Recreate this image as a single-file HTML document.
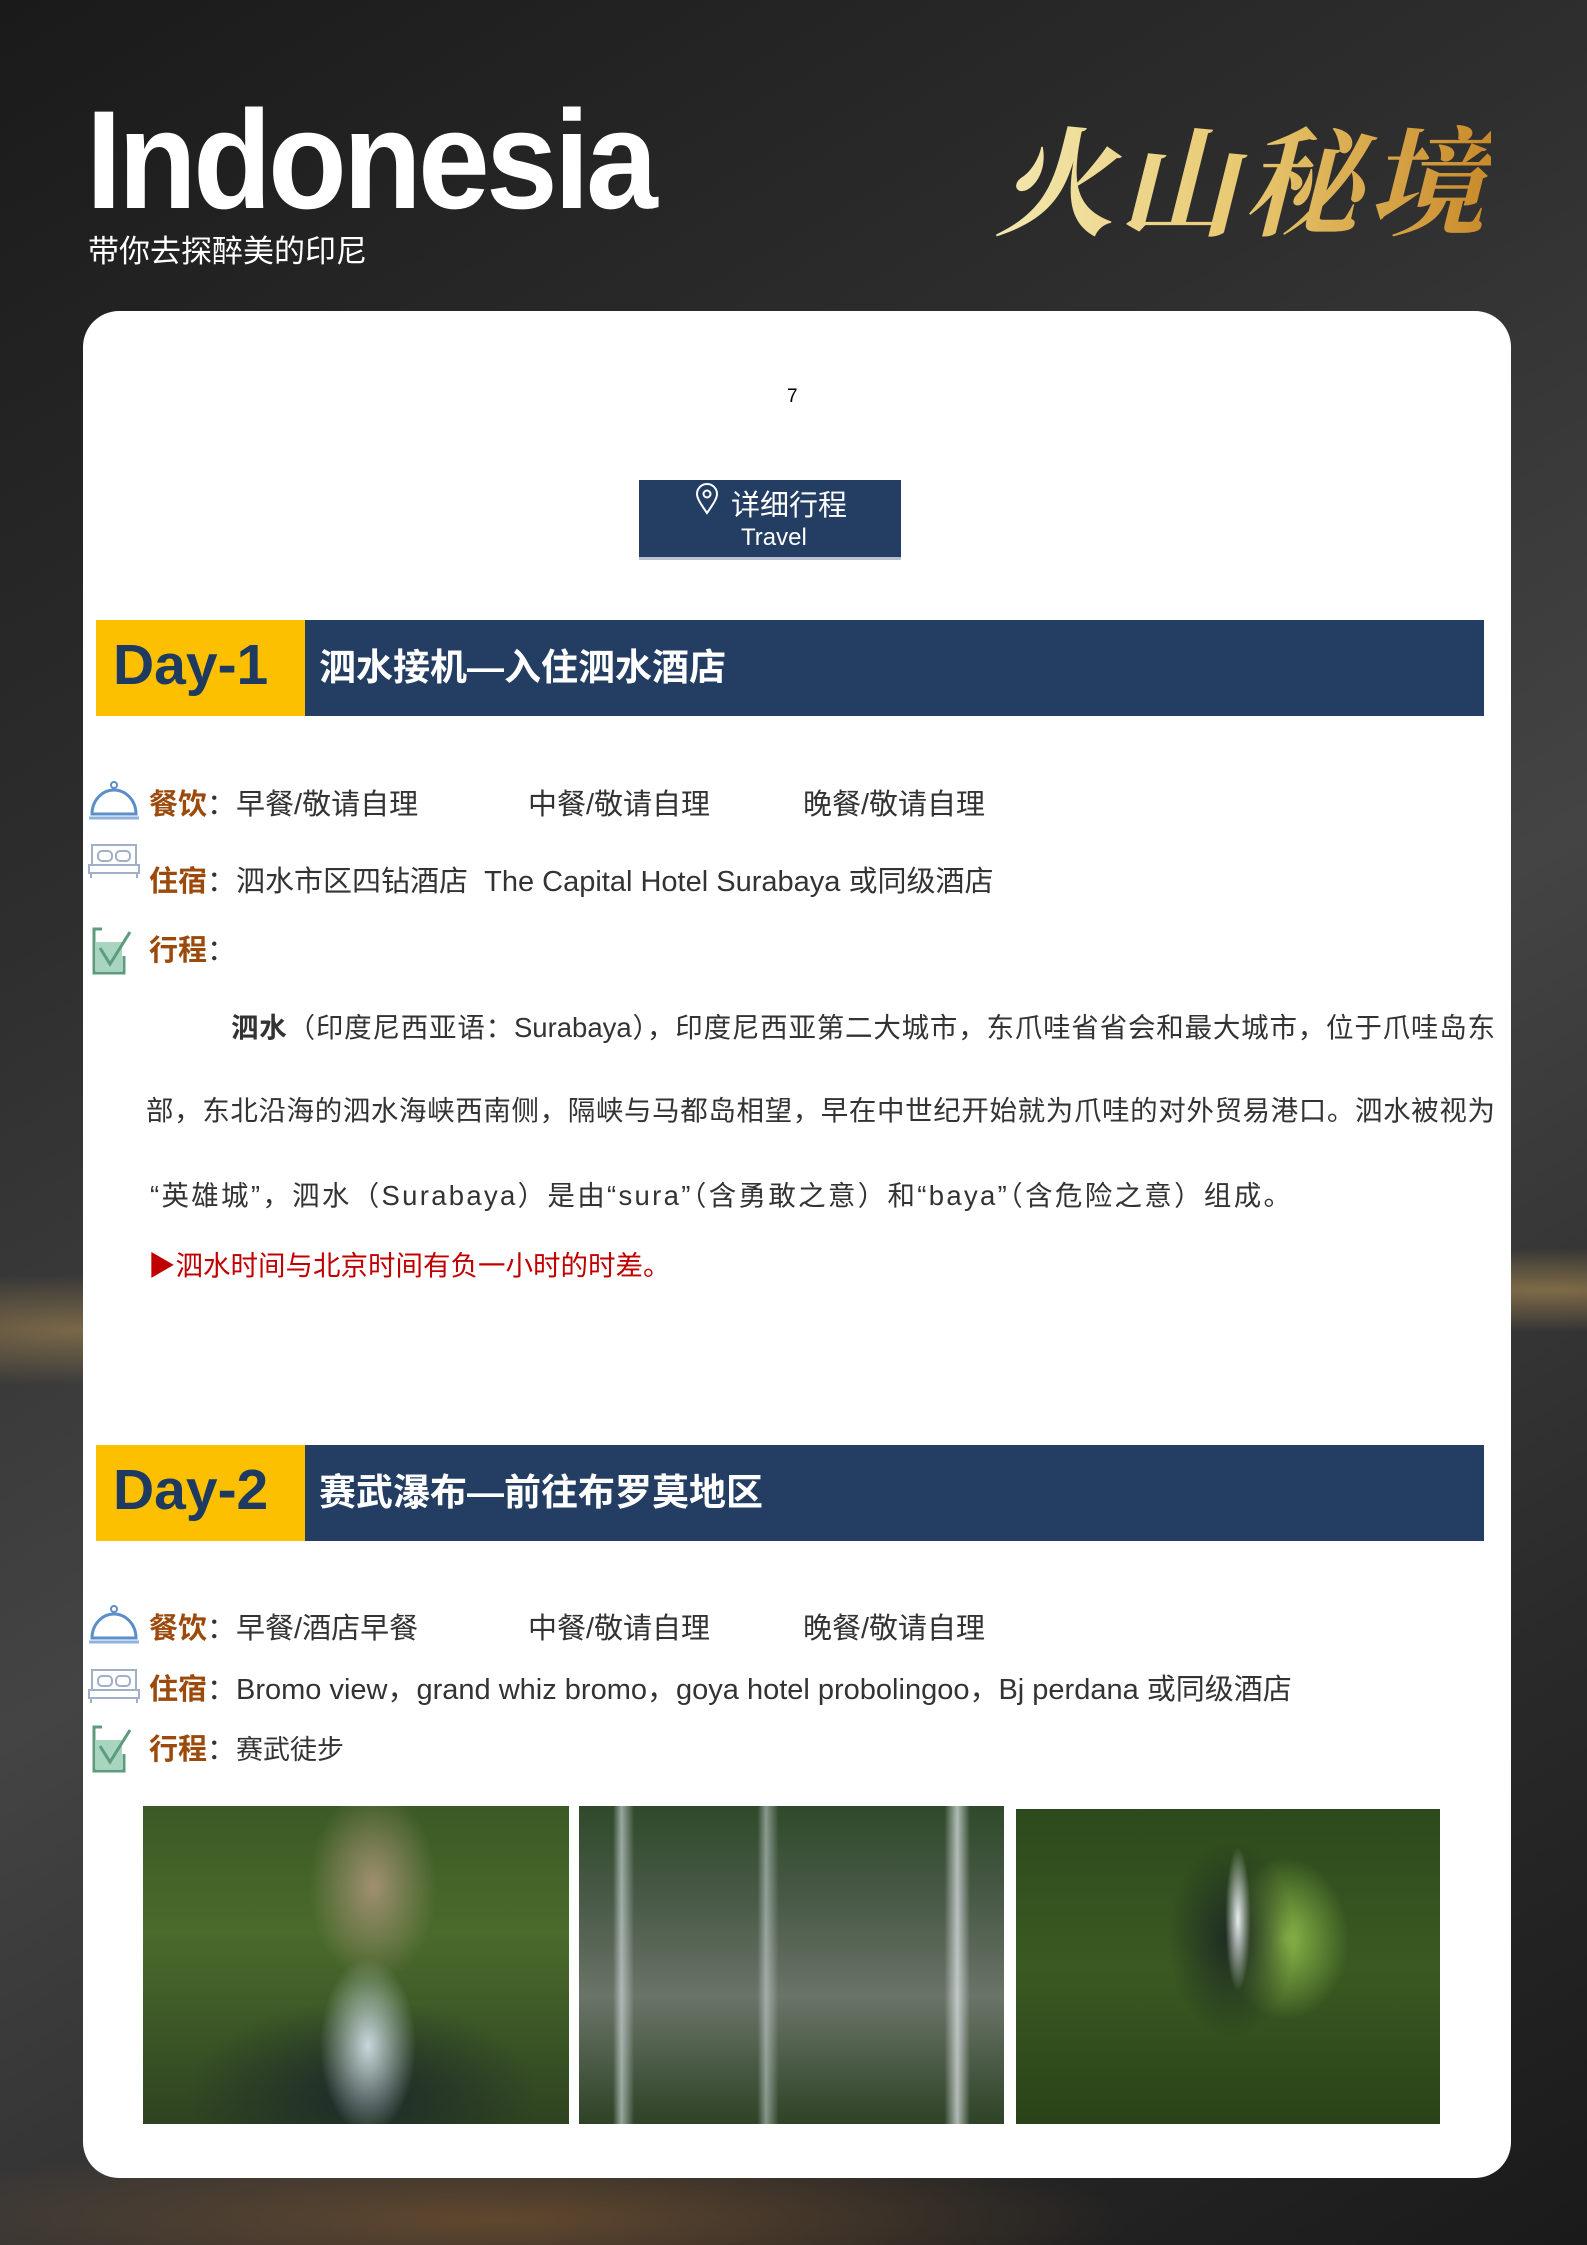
<!DOCTYPE html>
<html><head><meta charset="utf-8">
<style>
*{margin:0;padding:0;box-sizing:border-box}
body{width:1587px;height:2245px;position:relative;overflow:hidden;
background:
radial-gradient(ellipse 500px 80px at 80px 1330px,rgba(200,160,90,.45),transparent 70%),
radial-gradient(ellipse 600px 60px at 1550px 1290px,rgba(200,160,90,.5),transparent 70%),
radial-gradient(ellipse 900px 120px at 500px 2220px,rgba(150,100,50,.5),transparent 70%),
linear-gradient(150deg,#1a1a1a 0%,#2e2e2e 30%,#444 55%,#2a2a2a 80%,#1a1a1a 100%);
font-family:"Liberation Sans","Noto Sans CJK SC",sans-serif;color:#333}
.a{position:absolute;white-space:nowrap}
.card{position:absolute;left:83px;top:311px;width:1428px;height:1867px;background:#fff;border-radius:36px}
.lbl{color:#9c4a0c;font-weight:bold}
.row{font-size:29px;line-height:34px}
.bar{position:absolute;left:96px;width:1388px;height:96px;background:#233d63}
.bar .y{position:absolute;left:0;top:0;width:209px;height:96px;background:#fcc000;color:#1f3a60;font-weight:bold;font-size:57px;line-height:90px;padding-left:17px}
.bar .t{position:absolute;left:223px;top:0;color:#fff;font-weight:bold;font-size:37px;line-height:96px}
.p{font-size:27.5px;line-height:34px;position:absolute}
.j{text-align:justify;text-align-last:justify}
</style></head><body>
<div class="a" style="left:86px;top:80px;font-size:140px;font-weight:bold;color:#fff;letter-spacing:-4px;line-height:160px;transform:scaleX(0.92);transform-origin:left top">Indonesia</div>
<div class="a" style="left:88px;top:232px;font-size:31px;color:#fff;line-height:40px">带你去探醉美的印尼</div>
<div class="a" style="left:995px;top:100px;font-size:118px;line-height:150px;font-family:'Noto Serif CJK SC',serif;font-weight:bold;font-style:italic;background:linear-gradient(90deg,#f3e8b0,#e8c870 50%,#c98a2a);-webkit-background-clip:text;background-clip:text;color:transparent;letter-spacing:6px">火山秘境</div>

<div class="card"></div>
<div class="a" style="left:787px;top:386px;font-size:19px;color:#000">7</div>
<div class="a" style="left:639px;top:480px;width:262px;height:80px;background:#233d63;border-bottom:3px solid #b8c2d0"></div>
<svg class="a" style="left:694px;top:483px" width="26" height="32" viewBox="0 0 26 32"><path d="M13 30 C6 20 3 15 3 11 A10 10 0 0 1 23 11 C23 15 20 20 13 30Z" fill="none" stroke="#fff" stroke-width="2"/><circle cx="13" cy="11" r="3.5" fill="none" stroke="#fff" stroke-width="2"/></svg>
<div class="a" style="left:731px;top:488px;font-size:29px;color:#fff;line-height:36px">详细行程</div>
<div class="a" style="left:741px;top:523px;font-size:24px;color:#fff;line-height:30px">Travel</div>

<div class="bar" style="top:620px"><div class="y">Day-1</div><div class="t">泗水接机—入住泗水酒店</div></div>

<svg class="a" style="left:88px;top:780px" width="52" height="42" viewBox="0 0 52 42"><circle cx="26" cy="5" r="3" fill="none" stroke="#5b8fc9" stroke-width="2"/><path d="M4 34 A22 24 0 0 1 48 34 Z" fill="none" stroke="#5b8fc9" stroke-width="3"/><line x1="1" y1="38" x2="51" y2="38" stroke="#8fb2dc" stroke-width="3"/></svg>
<div class="a row" style="left:149px;top:788px"><span class="lbl">餐饮</span>：早餐/敬请自理</div>
<div class="a row" style="left:528px;top:788px">中餐/敬请自理</div>
<div class="a row" style="left:803px;top:788px">晚餐/敬请自理</div>
<svg class="a" style="left:88px;top:843px" width="52" height="36" viewBox="0 0 52 36"><rect x="4" y="2" width="44" height="20" fill="none" stroke="#9fb0c8" stroke-width="2"/><rect x="10" y="8" width="14" height="10" rx="4" fill="none" stroke="#9fb0c8" stroke-width="2"/><rect x="28" y="8" width="14" height="10" rx="4" fill="none" stroke="#9fb0c8" stroke-width="2"/><rect x="1" y="22" width="50" height="8" fill="none" stroke="#9fb0c8" stroke-width="2"/><line x1="3" y1="30" x2="3" y2="35" stroke="#9fb0c8" stroke-width="2"/><line x1="49" y1="30" x2="49" y2="35" stroke="#9fb0c8" stroke-width="2"/></svg>
<div class="a row" style="left:149px;top:865px"><span class="lbl">住宿</span>：泗水市区四钻酒店&nbsp; The Capital Hotel Surabaya 或同级酒店</div>
<svg class="a" style="left:90px;top:926px" width="46" height="50" viewBox="0 0 46 50"><path d="M12 3 H4 V47 H34 V30" fill="none" stroke="#5c9c7c" stroke-width="3"/><rect x="6" y="16" width="26" height="29" fill="#a8d5bf"/><path d="M10 22 L20 38 L40 6" fill="none" stroke="#5c9c7c" stroke-width="3"/></svg>
<div class="a row" style="left:149px;top:934px"><span class="lbl">行程</span>：</div>

<div class="p j" style="left:231px;top:1011px;width:1264px"><b>泗水</b>（印度尼西亚语：Surabaya），印度尼西亚第二大城市，东爪哇省省会和最大城市，位于爪哇岛东</div>
<div class="p j" style="left:146px;top:1094px;width:1349px">部，东北沿海的泗水海峡西南侧，隔峡与马都岛相望，早在中世纪开始就为爪哇的对外贸易港口。泗水被视为</div>
<div class="p a" style="left:150px;top:1179px;letter-spacing:2.3px">“英雄城”，泗水（Surabaya）是由“sura”（含勇敢之意）和“baya”（含危险之意）组成。</div>
<div class="p a" style="left:148px;top:1249px;color:#c00000">▶泗水时间与北京时间有负一小时的时差。</div>

<div class="bar" style="top:1445px"><div class="y">Day-2</div><div class="t">赛武瀑布—前往布罗莫地区</div></div>

<svg class="a" style="left:88px;top:1604px" width="52" height="42" viewBox="0 0 52 42"><circle cx="26" cy="5" r="3" fill="none" stroke="#5b8fc9" stroke-width="2"/><path d="M4 34 A22 24 0 0 1 48 34 Z" fill="none" stroke="#5b8fc9" stroke-width="3"/><line x1="1" y1="38" x2="51" y2="38" stroke="#8fb2dc" stroke-width="3"/></svg>
<div class="a row" style="left:149px;top:1612px"><span class="lbl">餐饮</span>：早餐/酒店早餐</div>
<div class="a row" style="left:528px;top:1612px">中餐/敬请自理</div>
<div class="a row" style="left:803px;top:1612px">晚餐/敬请自理</div>
<svg class="a" style="left:88px;top:1668px" width="52" height="36" viewBox="0 0 52 36"><rect x="4" y="2" width="44" height="20" fill="none" stroke="#9fb0c8" stroke-width="2"/><rect x="10" y="8" width="14" height="10" rx="4" fill="none" stroke="#9fb0c8" stroke-width="2"/><rect x="28" y="8" width="14" height="10" rx="4" fill="none" stroke="#9fb0c8" stroke-width="2"/><rect x="1" y="22" width="50" height="8" fill="none" stroke="#9fb0c8" stroke-width="2"/><line x1="3" y1="30" x2="3" y2="35" stroke="#9fb0c8" stroke-width="2"/><line x1="49" y1="30" x2="49" y2="35" stroke="#9fb0c8" stroke-width="2"/></svg>
<div class="a row" style="left:149px;top:1673px"><span class="lbl">住宿</span>：Bromo view，grand whiz bromo，goya hotel probolingoo，Bj perdana 或同级酒店</div>
<svg class="a" style="left:90px;top:1724px" width="46" height="50" viewBox="0 0 46 50"><path d="M12 3 H4 V47 H34 V30" fill="none" stroke="#5c9c7c" stroke-width="3"/><rect x="6" y="16" width="26" height="29" fill="#a8d5bf"/><path d="M10 22 L20 38 L40 6" fill="none" stroke="#5c9c7c" stroke-width="3"/></svg>
<div class="a row" style="left:149px;top:1733px"><span class="lbl">行程</span>：<span style="font-size:27px">赛武徒步</span></div>

<div class="a" style="left:143px;top:1806px;width:426px;height:318px;background:radial-gradient(ellipse 60px 110px at 225px 240px,#c8d8dc,transparent 80%),radial-gradient(ellipse 220px 120px at 220px 290px,#1d2a2a,transparent 80%),radial-gradient(ellipse 80px 120px at 230px 80px,#a09070,transparent 80%),linear-gradient(180deg,#3b5a25,#4a6b2c 40%,#2e4320)"></div>
<div class="a" style="left:579px;top:1806px;width:425px;height:318px;background:linear-gradient(90deg,transparent 8%,rgba(220,230,235,.6) 10%,transparent 13%,transparent 42%,rgba(220,230,235,.5) 44%,transparent 47%,transparent 86%,rgba(230,235,240,.7) 89%,transparent 92%),linear-gradient(180deg,#2f4a2a 0%,#4a5a48 30%,#6a7468 60%,#2e4326 100%)"></div>
<div class="a" style="left:1016px;top:1809px;width:424px;height:315px;background:radial-gradient(ellipse 14px 80px at 222px 110px,#e8eef0,transparent 90%),radial-gradient(ellipse 70px 110px at 215px 130px,#1e2a22,transparent 90%),radial-gradient(ellipse 70px 90px at 270px 130px,#8bb848,transparent 90%),linear-gradient(180deg,#2c4a1c,#3a5a22 50%,#2a4218)"></div>
</body></html>
